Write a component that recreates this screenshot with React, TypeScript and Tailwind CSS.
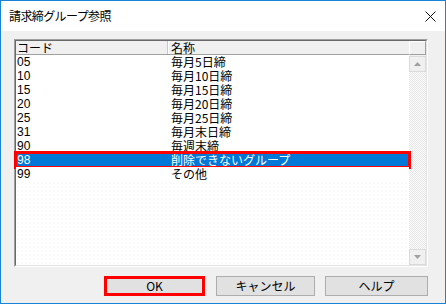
import React from "react";

const rows: [string, string][] = [
  ["05", "毎月5日締"],
  ["10", "毎月10日締"],
  ["15", "毎月15日締"],
  ["20", "毎月20日締"],
  ["25", "毎月25日締"],
  ["31", "毎月末日締"],
  ["90", "毎週末締"],
  ["98", "削除できないグループ"],
  ["99", "その他"],
];

function Arrow({ up }: { up: boolean }) {
  return (
    <svg width="7" height="4" viewBox="0 0 7 4">
      {up ? <polygon points="0,4 7,4 3.5,0" fill="#a0a0a0" /> : <polygon points="0,0 7,0 3.5,4" fill="#a0a0a0" />}
    </svg>
  );
}

export default function App() {
  return (
    <div className="w-[446px] h-[304px] bg-[#f0f0f0] border border-[#1883d7] flex flex-col text-[12px] text-black font-['Noto_Sans_CJK_JP',sans-serif] leading-[14px] overflow-hidden">
      {/* title bar */}
      <div className="h-[30px] bg-white flex items-center justify-between pl-[8px] pr-[9px] shrink-0">
        <span className="text-[12px] tracking-[-0.6px] text-black leading-[16px]">請求締グループ参照</span>
        <svg width="11" height="11" viewBox="0 0 11 11">
          <path d="M0.5 0.5 L10.5 10.5 M10.5 0.5 L0.5 10.5" stroke="#111" strokeWidth="1" />
        </svg>
      </div>
      {/* body */}
      <div className="flex flex-col pl-[13px] pt-[8px]">
        {/* list box */}
        <div className="w-[414px] h-[228px] border border-t-[#a0a0a0] border-l-[#a0a0a0] border-b-white border-r-white">
          <div className="w-full h-full border border-t-[#696969] border-l-[#696969] border-b-[#e3e3e3] border-r-[#e3e3e3] flex">
            <div className="flex-1 flex flex-col bg-white bg-[radial-gradient(circle,#ececec_0.5px,transparent_0.8px)] bg-[length:4px_4px]">
              <div className="h-[14px] flex bg-[#f0f0f0] border-b border-[#a0a0a0] shrink-0">
                <div className="w-[152px] border-r border-[#c8c8c8] flex items-center pl-[1px] leading-[13px]">コード</div>
                <div className="flex-1 flex items-center pl-[2px] border-l border-white leading-[13px]">名称</div>
              </div>
              {rows.map(([c, n]) => {
                const sel = c === "98";
                return (
                  <div
                    key={c}
                    className={
                      "relative h-[14px] flex items-center shrink-0 leading-[14px] " +
                      (sel ? "bg-[#0078d7] text-white" : "bg-white")
                    }
                  >
                    <div className="w-[153px] pl-[1px] font-['Liberation_Sans',sans-serif]">{c}</div>
                    <div className="flex-1 pl-[2px]">{n}</div>
                    {sel && (
                      <div className="absolute left-[-2px] right-[-2px] top-[-2px] bottom-[-2px] border-[3px] border-[#ff0000]" />
                    )}
                  </div>
                );
              })}
            </div>
            {/* scrollbar */}
            <div className="w-[17px] flex flex-col">
              <div className="h-[14px] bg-[#f0f0f0] border border-t-white border-l-white border-b-[#a0a0a0] border-r-[#a0a0a0] shrink-0" />
              <div className="h-[16px] bg-[#f0f0f0] border border-[#dadada] flex items-center justify-center shrink-0 mt-[1px]">
                <Arrow up />
              </div>
              <div className="flex-1 bg-[#f4f4f4] bg-[conic-gradient(#e8e8e8_25%,#fafafa_0_50%,#e8e8e8_0_75%,#fafafa_0)] bg-[length:2px_2px]" />
              <div className="h-[16px] bg-[#f0f0f0] border border-[#dadada] flex items-center justify-center shrink-0">
                <Arrow up={false} />
              </div>
            </div>
          </div>
        </div>
        {/* buttons */}
        <div className="mt-[9px] h-[20px] flex pl-[90px]">
          <div className="w-[101px] h-full bg-[#e1e1e1] border-[3px] border-[#ff0000] flex items-center justify-center">OK</div>
          <div className="ml-[11px] w-[99px] h-full bg-[#e1e1e1] border border-[#adadad] flex items-center justify-center">キャンセル</div>
          <div className="ml-[10px] w-[103px] h-full bg-[#e1e1e1] border border-[#adadad] flex items-center justify-center">ヘルプ</div>
        </div>
      </div>
    </div>
  );
}
